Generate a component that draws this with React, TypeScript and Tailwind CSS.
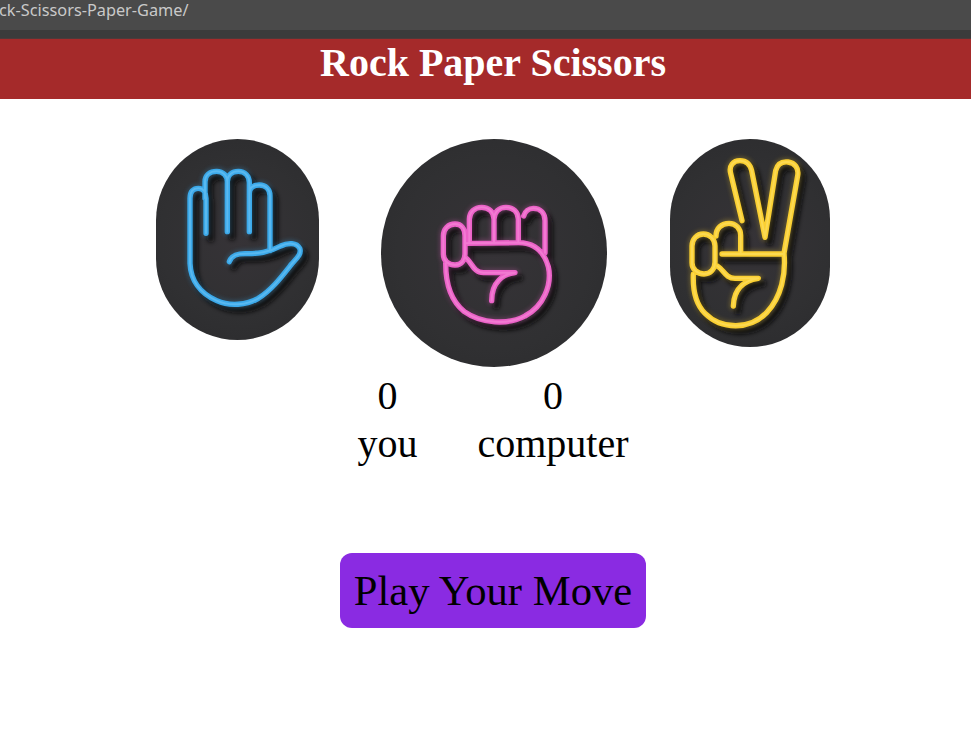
import type { ReactNode } from "react";

const serif = "font-['Liberation_Serif','Times_New_Roman',serif]";

function NeonIcon({ box, color, core, paths, id }: { box: string; color: string; core: string; paths: string; id: string }) {
  return (
    <svg viewBox={box} className="h-full w-full" fill="none" strokeLinecap="round" strokeLinejoin="round">
      <defs>
        <filter id={`${id}-blur`} x="-30%" y="-30%" width="160%" height="160%">
          <feGaussianBlur stdDeviation="6" />
        </filter>
        <filter id={`${id}-soft`} x="-30%" y="-30%" width="160%" height="160%">
          <feGaussianBlur stdDeviation="1.5" />
        </filter>
      </defs>
      <path d={paths} stroke="#0e0e10" strokeWidth="20" opacity="0.9" transform="translate(14 16)" filter={`url(#${id}-blur)`} />
      <path d={paths} stroke={color} strokeWidth="24" opacity="0.25" filter={`url(#${id}-blur)`} />
      <path d={paths} stroke={color} strokeWidth="16" filter={`url(#${id}-soft)`} />
      <path d={paths} stroke={core} strokeWidth="6" opacity="0.3" filter={`url(#${id}-soft)`} />
    </svg>
  );
}

function Tile({ className, children }: { className: string; children: ReactNode }) {
  return <div className={`shrink-0 overflow-hidden bg-[radial-gradient(circle,#363337_0%,#303032_60%,#2b2b2d_100%)] ${className}`}>{children}</div>;
}

const hand =
  "M238 395 C245 375 262 371 285 371 C325 371 355 368 392 348 C415 337 440 338 449 355 C456 372 440 385 425 402 C395 440 365 480 325 505 C290 525 240 530 200 512 C150 490 122 450 120 400 L120 205 C120 185 130 175 145 175 C160 175 168 187 168 205 L168 310 M165 205 L165 155 C165 135 180 124 200 124 C220 124 232 138 232 155 L232 305 M232 155 C232 135 247 124 265 124 C285 124 298 138 298 158 L298 305 M298 190 C298 172 312 165 328 165 C347 165 360 178 360 197 L360 362";

const fist =
  "M283 340 L283 268 C283 245 300 232 320 232 C342 232 357 247 357 268 L357 338 M357 268 C357 245 373 232 393 232 C415 232 430 247 430 268 L430 338 M446 258 C450 243 462 235 475 235 C497 235 510 250 510 272 L510 368 M272 340 L430 338 C480 338 508 368 520 410 C532 465 505 530 450 558 C400 585 320 582 268 545 C230 515 212 470 212 400 M240 282 C220 282 205 297 205 318 L205 372 C205 392 220 405 240 405 C262 405 270 388 270 370 L270 318 C270 297 260 282 240 282 Z M270 382 C290 395 295 428 325 428 L420 428 C385 432 350 455 350 512";

const peace =
  "M246 272 L212 130 C206 107 220 92 240 92 C258 92 270 102 275 122 L315 322 L347 122 C352 102 366 94 384 96 C405 99 417 114 413 137 L372 370 C378 430 365 500 320 548 C270 600 185 600 135 550 C105 520 98 480 100 432 M130 312 C110 312 96 328 96 348 L96 398 C96 418 112 432 132 432 C152 432 165 416 165 396 L165 348 C165 328 150 312 130 312 Z M168 318 C168 295 185 280 207 280 C228 280 242 296 242 316 L242 372 M186 372 L372 372 M172 408 C192 420 196 445 225 445 L295 445 C260 450 222 470 220 528";

export default function App() {
  return (
    <div className={`h-[737px] w-[971px] overflow-hidden bg-white ${serif}`}>
      <div className="w-[986px]">
        <div className="h-[30px] overflow-hidden bg-[#4a4a4a]">
          <p className="ml-[-1px] whitespace-nowrap font-['Noto_Sans',sans-serif] text-[16.3px] leading-[20px] text-[#c9c9c9]">ck-Scissors-Paper-Game/</p>
        </div>
        <div className="h-[8px] bg-[#3b3b3b]" />
        <div className="h-px bg-[#4d3a3a]" />
        <header className="flex h-[60px] justify-center bg-[#a52a2a]">
          <h1 className="text-[40px] font-bold leading-[48px] text-white">Rock Paper Scissors</h1>
        </header>
        <main className="flex flex-col items-center">
          <div className="mt-[40px] flex items-start">
            <Tile className="mr-[62px] h-[201px] w-[163px] rounded-[82px]">
              <NeonIcon id="hand" box="18 27 489 603" color="#3ba9ea" core="#9fdcff" paths={hand} />
            </Tile>
            <Tile className="mr-[63px] h-[228px] w-[226px] rounded-full">
              <NeonIcon id="fist" box="18 27 678 684" color="#ec62c8" core="#ffb4ea" paths={fist} />
            </Tile>
            <Tile className="h-[208px] w-[160px] rounded-[80px]">
              <NeonIcon id="peace" box="30 27 480 624" color="#fbd030" core="#fff0a0" paths={peace} />
            </Tile>
          </div>
          <div className="mt-[5px] flex gap-[60px] text-[40px] leading-[48px] text-black">
            <div className="text-center">
              <p>0</p>
              <p>you</p>
            </div>
            <div className="text-center">
              <p>0</p>
              <p>computer</p>
            </div>
          </div>
          <button className="mt-[85px] flex h-[75px] w-[306px] items-center justify-center rounded-[12px] bg-[#8a2be2] text-[42.67px] text-black">Play Your Move</button>
        </main>
      </div>
    </div>
  );
}
